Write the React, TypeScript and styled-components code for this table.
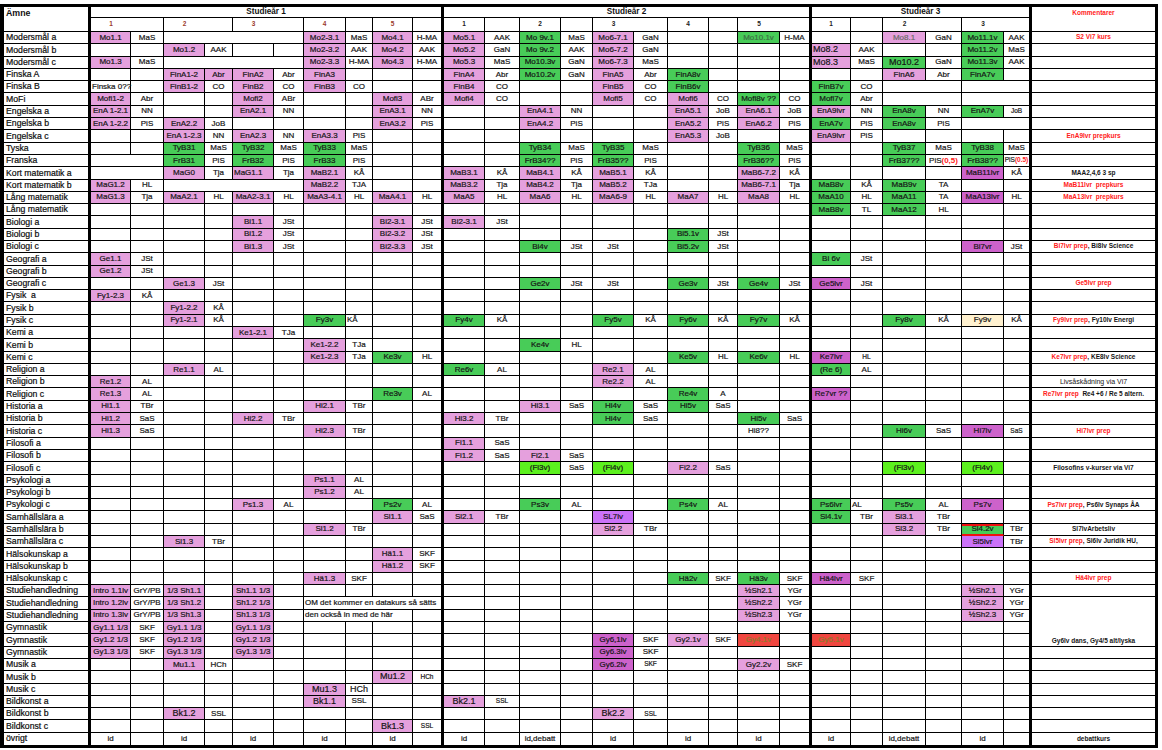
import React from 'react';
import styled, { createGlobalStyle, css } from 'styled-components';

const GlobalStyle = createGlobalStyle`
  html, body {
    margin: 0;
    padding: 0;
    background: #fff;
  }
  body {
    font-family: "Liberation Sans", Arial, sans-serif;
    color: #111;
  }
`;

// column widths: subject, year 1 (5 periods x course/teacher), year 2, year 3, comments
const COLS = [87, 40, 33, 41, 28, 41, 30, 42, 27, 40, 31, 41, 35, 41, 32, 41, 34, 41, 29, 42, 32, 39, 32, 43, 36, 42, 28, 123];
const THICK = [0, 10, 20, 26];

const FILL: Record<string, string> = {
  p: '#e5a0dd',
  m: '#cd62cb',
  v: '#cb72f8',
  g: '#48cc58',
  l: '#5cf01e',
  r: '#f0463f',
  y: '#fff1cf',
};

type Edge = 'thin' | 'thick' | 'none';
const edgeWidth = (e?: Edge) => (e === 'thick' ? '3px' : e === 'none' ? '0' : '1px');

const Page = styled.div`
  padding-top: 4px;
`;

const Sheet = styled.div`
  box-sizing: border-box;
  display: grid;
  width: max-content;
  height: 744px;
  grid-template-columns: ${COLS.map(w => `${w}px`).join(' ')};
  grid-template-rows: 11px 14px repeat(58, 1fr);
  border: 3px solid #000;
  border-left-width: 4px;
`;

const Cell = styled.div<{ $span?: number; $rows?: number; $edge?: Edge; $flat?: boolean }>`
  box-sizing: border-box;
  grid-column: span ${p => p.$span ?? 1};
  grid-row: span ${p => p.$rows ?? 1};
  border-right: ${p => edgeWidth(p.$edge)} solid #000;
  border-bottom: ${p => (p.$flat ? '0' : '1px')} solid #000;
  display: flex;
  align-items: center;
  min-width: 0;
  white-space: nowrap;
  line-height: 1;
`;

const CornerCell = styled(Cell)`
  align-items: flex-start;
  padding: 2px 0 0 2px;
  font-size: 8.8px;
  font-weight: 700;
`;

const YearCell = styled(Cell)`
  justify-content: center;
  font-size: 8.2px;
  font-weight: 700;
`;

const NoteHead = styled(Cell)`
  justify-content: center;
  align-items: flex-start;
  padding-top: 3px;
  font-size: 6.5px;
  font-weight: 700;
  color: #ff2020;
`;

const PeriodCell = styled(Cell)<{ $first?: boolean }>`
  justify-content: center;
  font-size: 6.5px;
  font-weight: 700;
  color: ${p => (p.$first ? '#9b3b2b' : '#222')};
`;

const SubjectCell = styled(Cell)`
  padding-left: 2px;
  font-size: 8.7px;
  white-space: pre;
  color: #0d0d0d;
  -webkit-text-stroke: 0.2px #0d0d0d;
`;

const CourseCell = styled(Cell)<{ $fill?: string; $left?: boolean; $size?: number; $ink?: string; $redEdge?: boolean }>`
  justify-content: ${p => (p.$left ? 'flex-start' : 'center')};
  padding-left: ${p => (p.$left ? '1px' : '0')};
  background: ${p => p.$fill ?? 'transparent'};
  font-size: ${p => p.$size ?? 8}px;
  color: ${p => p.$ink ?? '#151515'};
  -webkit-text-stroke: 0.2px ${p => p.$ink ?? '#151515'};
  ${p =>
    p.$redEdge &&
    css`
      border-bottom: 2px solid #f01010;
      box-shadow: inset 0 2px 0 #f01010;
    `}
`;

const NoteCell = styled(Cell)<{ $plain?: boolean; $low?: boolean }>`
  justify-content: center;
  align-items: ${p => (p.$low ? 'flex-end' : 'center')};
  padding-bottom: ${p => (p.$low ? '1px' : '0')};
  font-size: ${p => (p.$plain ? 7 : 6.5)}px;
  font-weight: ${p => (p.$plain ? 400 : 700)};
  color: #161616;
`;

const Hot = styled.span`
  color: #ff2020;
  font-weight: 700;
  -webkit-text-stroke: 0;
`;

const Small = styled.span`
  font-size: 6.5px;
`;

type Spec = string | number | { t: React.ReactNode; span?: number; left?: boolean; fill?: string; redEdge?: boolean; size?: number };

type Row = {
  s: string;
  c: Record<number, Spec>;
  n?: React.ReactNode;
  plain?: boolean;
  nRows?: number;
  skipNote?: boolean;
};

type Look = { text: React.ReactNode; span: number; fill?: string; left?: boolean; size?: number; ink?: string; redEdge?: boolean };

// 'p:Mo1.1' -> pink cell, flags: fill letter, s small, B big, L left, d dim ink
function look(v: Spec | undefined): Look {
  if (v === undefined) return { text: null, span: 1 };
  if (typeof v === 'number') return { text: null, span: v };
  if (typeof v === 'object') return { text: v.t, span: v.span ?? 1, fill: v.fill, left: v.left, redEdge: v.redEdge, size: v.size };
  const m = /^([A-Za-z]+):(.+)$/.exec(v);
  const flags = m ? m[1] : '';
  const text = m ? m[2] : v;
  const key = flags.split('').find(f => f in FILL);
  const fill = key ? FILL[key] : undefined;
  let ink: string | undefined;
  if (key === 'r') ink = '#8a7a2a';
  if (flags.includes('d')) ink = key === 'g' ? '#3d6e45' : '#6a6a6a';
  return {
    text,
    span: 1,
    fill,
    ink,
    left: flags.includes('L'),
    size: flags.includes('s') ? 6.5 : flags.includes('B') ? 9 : undefined,
  };
}

const rows: Row[] = [
  { s: 'Modersmål a', c: { 1: 'p:Mo1.1', 2: 'MaS', 3: 4, 7: 'p:Mo2-3.1', 8: 'MaS', 9: 'p:Mo4.1', 10: 'H-MA', 11: 'p:Mo5.1', 12: 'AAK', 13: 'g:Mo 9v.1', 14: 'MaS', 15: 'p:Mo6-7.1', 16: 'GaN', 19: 'gd:Mo10.1v', 20: 'H-MA', 23: 'pd:Mo8.1', 24: 'GaN', 25: 'g:Mo11.1v', 26: 'AAK' }, n: <Hot>S2 Vi7 kurs</Hot> },
  { s: 'Modersmål b', c: { 3: 'p:Mo1.2', 4: 'AAK', 7: 'p:Mo2-3.2', 8: 'AAK', 9: 'p:Mo4.2', 10: 'AAK', 11: 'p:Mo5.2', 12: 'GaN', 13: 'g:Mo 9v.2', 14: 'AAK', 15: 'p:Mo6-7.2', 16: 'GaN', 21: 'pLB:Mo8.2', 22: 'AAK', 25: 'g:Mo11.2v', 26: 'MaS' } },
  { s: 'Modersmål c', c: { 1: 'p:Mo1.3', 2: 'MaS', 3: 4, 7: 'p:Mo2-3.3', 8: 'H-MA', 9: 'p:Mo4.3', 10: 'H-MA', 11: 'p:Mo5.3', 12: 'MaS', 13: 'g:Mo10.3v', 14: 'GaN', 15: 'p:Mo6-7.3', 16: 'MaS', 21: 'pLB:Mo8.3', 22: 'MaS', 23: 'gB:Mo10.2', 24: 'GaN', 25: 'g:Mo11.3v', 26: 'AAK' } },
  { s: 'Finska A', c: { 3: 'p:FinA1-2', 4: 'p:Abr', 5: 'p:FinA2', 6: 'Abr', 7: 'p:FinA3', 11: 'p:FinA4', 12: 'Abr', 13: 'g:Mo10.2v', 14: 'GaN', 15: 'p:FinA5', 16: 'Abr', 17: 'g:FinA8v', 23: 'p:FinA6', 24: 'Abr', 25: 'g:FinA7v' } },
  { s: 'Finska B', c: { 1: 'L:Finska 0??', 3: 'p:FinB1-2', 4: 'CO', 5: 'p:FinB2', 6: 'CO', 7: 'p:FinB3', 8: 'CO', 11: 'p:FinB4', 12: 'CO', 15: 'p:FinB5', 16: 'CO', 17: 'g:FinB6v', 21: 'g:FinB7v', 22: 'CO', 23: 2, 25: 2 } },
  { s: 'MoFi', c: { 1: 'p:Mofi1-2', 2: 'Abr', 5: 'p:Mofi2', 6: 'ABr', 9: 'p:Mofi3', 10: 'ABr', 11: 'p:Mofi4', 12: 'CO', 15: 'p:Mofi5', 16: 'CO', 17: 'p:Mofi6', 18: 'CO', 19: 'g:Mofi8v ??', 20: 'CO', 21: 'g:Mofi7v', 22: 'Abr', 23: 2, 25: 2 } },
  { s: 'Engelska a', c: { 1: 'p:EnA 1-2.1', 2: 'NN', 5: 'p:EnA2.1', 6: 'NN', 9: 'p:EnA3.1', 10: 'NN', 13: 'p:EnA4.1', 14: 'NN', 17: 'p:EnA5.1', 18: 'JoB', 19: 'p:EnA6.1', 20: 'JoB', 21: 'p:EnA9lvr', 22: 'NN', 23: 'g:EnA8v', 24: 'NN', 25: 'g:EnA7v', 26: 's:JoB' } },
  { s: 'Engelska b', c: { 1: 'p:EnA 1-2.2', 2: 'PiS', 3: 'p:EnA2.2', 4: 'JoB', 9: 'p:EnA3.2', 10: 'PiS', 13: 'p:EnA4.2', 14: 'PiS', 17: 'p:EnA5.2', 18: 'PiS', 19: 'p:EnA6.2', 20: 'PiS', 21: 'g:EnA7v', 22: 'PiS', 23: 'g:EnA8v', 24: 'PiS', 25: 2 } },
  { s: 'Engelska c', c: { 3: 'p:EnA 1-2.3', 4: 'NN', 5: 'p:EnA2.3', 6: 'NN', 7: 'p:EnA3.3', 8: 'PiS', 17: 'p:EnA5.3', 18: 'JoB', 21: 'p:EnA9lvr', 22: 'PiS' }, n: <Hot>EnA9lvr prepkurs</Hot> },
  { s: 'Tyska', c: { 3: 'g:TyB31', 4: 'MaS', 5: 'g:TyB32', 6: 'MaS', 7: 'g:TyB33', 8: 'MaS', 13: 'g:TyB34', 14: 'MaS', 15: 'g:TyB35', 16: 'MaS', 19: 'g:TyB36', 20: 'MaS', 23: 'g:TyB37', 24: 'MaS', 25: 'g:TyB38', 26: 'MaS' } },
  {
    s: 'Franska',
    c: {
      1: 2, 3: 'g:FrB31', 4: 'PiS', 5: 'g:FrB32', 6: 'PiS', 7: 'g:FrB33', 8: 'PiS', 13: 'g:FrB34??', 14: 'PiS', 15: 'g:FrB35??', 16: 'PiS', 19: 'g:FrB36??', 20: 'PiS', 23: 'g:FrB37??',
      24: { t: <>PiS<Hot>(0,5)</Hot></> },
      25: 'g:FrB38??',
      26: { t: <Small>PiS<Hot>(0.5)</Hot></Small> },
    },
  },
  { s: 'Kort matematik a', c: { 1: 2, 3: 'p:MaG0', 4: 'Tja', 5: 'pL:MaG1.1', 6: 'Tja', 7: 'p:MaB2.1', 8: 'KÅ', 11: 'p:MaB3.1', 12: 'KÅ', 13: 'p:MaB4.1', 14: 'KÅ', 15: 'p:MaB5.1', 16: 'KÅ', 19: 'p:MaB6-7.2', 20: 'KÅ', 25: 'm:MaB11lvr', 26: 'KÅ' }, n: 'MAA2,4,6 3 sp' },
  { s: 'Kort matematik b', c: { 1: 'p:MaG1.2', 2: 'HL', 3: 4, 7: 'p:MaB2.2', 8: 'TJA', 11: 'p:MaB3.2', 12: 'Tja', 13: 'p:MaB4.2', 14: 'Tja', 15: 'p:MaB5.2', 16: 'TJa', 19: 'p:MaB6-7.1', 20: 'Tja', 21: 'g:MaB8v', 22: 'KÅ', 23: 'g:MaB9v', 24: 'TA' }, n: <Hot>MaB11lvr&nbsp; prepkurs</Hot> },
  { s: 'Lång matematik', c: { 1: 'p:MaG1.3', 2: 'Tja', 3: 'p:MaA2.1', 4: 'HL', 5: 'p:MaA2-3.1', 6: 'HL', 7: 'p:MaA3-4.1', 8: 'HL', 9: 'p:MaA4.1', 10: 'HL', 11: 'p:MaA5', 12: 'HL', 13: 'p:MaA6', 14: 'HL', 15: 'p:MaA6-9', 16: 'HL', 17: 'p:MaA7', 18: 'HL', 19: 'p:MaA8', 20: 'HL', 21: 'g:MaA10', 22: 'HL', 23: 'g:MaA11', 24: 'TA', 25: 'm:MaA13lvr', 26: 'HL' }, n: <Hot>MaA13lvr&nbsp; prepkurs</Hot> },
  { s: 'Lång matematik', c: { 21: 'g:MaB8v', 22: 'TL', 23: 'g:MaA12', 24: 'HL' } },
  { s: 'Biologi a', c: { 5: 'p:Bi1.1', 6: 'JSt', 9: 'p:Bi2-3.1', 10: 'JSt', 11: 'p:Bi2-3.1', 12: 'JSt' } },
  { s: 'Biologi b', c: { 5: 'p:Bi1.2', 6: 'JSt', 9: 'p:Bi2-3.2', 10: 'JSt', 17: 'g:Bi5.1v', 18: 'JSt' } },
  { s: 'Biologi c', c: { 5: 'p:Bi1.3', 6: 'JSt', 9: 'p:Bi2-3.3', 10: 'JSt', 13: 'g:Bi4v', 14: 'JSt', 15: 'JSt', 17: 'g:Bi5.2v', 18: 'JSt', 25: 'm:Bi7vr', 26: 'JSt' }, n: <><Hot>Bi7lvr prep</Hot>, Bi8lv Science</> },
  { s: 'Geografi a', c: { 1: 'p:Ge1.1', 2: 'JSt', 21: 'g:Bi 6v', 22: 'JSt' } },
  { s: 'Geografi b', c: { 1: 'p:Ge1.2', 2: 'JSt' } },
  { s: 'Geografi c', c: { 3: 'p:Ge1.3', 4: 'JSt', 13: 'g:Ge2v', 14: 'JSt', 15: 'JSt', 17: 'g:Ge3v', 18: 'JSt', 19: 'g:Ge4v', 20: 'JSt', 21: 'm:Ge5lvr', 22: 'JSt' }, n: <Hot>Ge5lvr prep</Hot> },
  { s: 'Fysik  a', c: { 1: 'p:Fy1-2.3', 2: 'KÅ' } },
  { s: 'Fysik b', c: { 3: 'p:Fy1-2.2', 4: 'KÅ' } },
  { s: 'Fysik c', c: { 3: 'p:Fy1-2.1', 4: 'KÅ', 7: 'g:Fy3v', 8: 'L:KÅ', 11: 'g:Fy4v', 12: 'KÅ', 15: 'g:Fy5v', 16: 'KÅ', 17: 'g:Fy6v', 18: 'KÅ', 19: 'g:Fy7v', 20: 'KÅ', 23: 'g:Fy8v', 24: 'KÅ', 25: 'y:Fy9v', 26: 'KÅ' }, n: <><Hot>Fy9lvr prep</Hot>, Fy10lv Energi</> },
  { s: 'Kemi a', c: { 5: 'p:Ke1-2.1', 6: 'TJa' } },
  { s: 'Kemi b', c: { 7: 'p:Ke1-2.2', 8: 'TJa', 13: 'g:Ke4v', 14: 'HL' } },
  { s: 'Kemi c', c: { 7: 'p:Ke1-2.3', 8: 'TJa', 9: 'g:Ke3v', 10: 'HL', 17: 'g:Ke5v', 18: 'HL', 19: 'g:Ke6v', 20: 'HL', 21: 'm:Ke7lvr', 22: 's:HL' }, n: <><Hot>Ke7lvr prep</Hot>, KE8lv Science</> },
  { s: 'Religion a', c: { 3: 'p:Re1.1', 4: 'AL', 11: 'g:Re6v', 12: 'AL', 15: 'p:Re2.1', 16: 'AL', 21: 'g:(Re 6)', 22: 'AL' } },
  { s: 'Religion b', c: { 1: 'p:Re1.2', 2: 'AL', 15: 'p:Re2.2', 16: 'AL' }, n: 'Livsåskådning via Vi7', plain: true },
  { s: 'Religion c', c: { 1: 'p:Re1.3', 2: 'AL', 9: 'g:Re3v', 10: 'AL', 17: 'g:Re4v', 18: 'A', 21: 'm:Re7vr ??' }, n: <><Hot>Re7lvr prep</Hot>&nbsp; Re4 +6 / Re 5 altern.</> },
  { s: 'Historia a', c: { 1: 'p:Hi1.1', 2: 'TBr', 7: 'p:Hi2.1', 8: 'TBr', 13: 'p:Hi3.1', 14: 'SaS', 15: 'g:Hi4v', 16: 'SaS', 17: 'g:Hi5v', 18: 'SaS' } },
  { s: 'Historia b', c: { 1: 'p:Hi1.2', 2: 'SaS', 5: 'p:Hi2.2', 6: 'TBr', 11: 'p:Hi3.2', 12: 'TBr', 15: 'g:Hi4v', 16: 'SaS', 19: 'g:Hi5v', 20: 'SaS' } },
  { s: 'Historia c', c: { 1: 'p:Hi1.3', 2: 'SaS', 7: 'p:Hi2.3', 8: 'TBr', 19: 'Hi8??', 23: 'g:Hi6v', 24: 'SaS', 25: 'm:Hi7lv', 26: 's:SaS' }, n: <Hot>Hi7lvr prep</Hot> },
  { s: 'Filosofi a', c: { 11: 'p:Fi1.1', 12: 'SaS' } },
  { s: 'Filosofi b', c: { 11: 'p:Fi1.2', 12: 'SaS', 13: 'p:Fi2.1', 14: 'SaS' } },
  { s: 'Filosofi c', c: { 13: 'l:(Fi3v)', 14: 'SaS', 15: 'l:(Fi4v)', 17: 'p:Fi2.2', 18: 'SaS', 23: 'l:(Fi3v)', 25: 'l:(Fi4v)' }, n: 'Filosofins v-kurser via Vi7' },
  { s: 'Psykologi a', c: { 7: 'p:Ps1.1', 8: 'AL' } },
  { s: 'Psykologi b', c: { 7: 'p:Ps1.2', 8: 'AL' } },
  { s: 'Psykologi c', c: { 5: 'p:Ps1.3', 6: 'AL', 9: 'g:Ps2v', 10: 'AL', 13: 'g:Ps3v', 14: 'AL', 17: 'g:Ps4v', 18: 'AL', 21: 'g:Ps6lvr', 22: 'L:AL', 23: 'g:Ps5v', 24: 'AL', 25: 'm:Ps7v' }, n: <><Hot>Ps7lvr prep</Hot>, Ps6lv Synaps ÅA</> },
  { s: 'Samhällslära a', c: { 9: 'p:Sl1.1', 10: 'SaS', 11: 'p:Sl2.1', 12: 'TBr', 15: 'v:SL7lv', 21: 'g:Sl4.1v', 22: 'TBr', 23: 'p:Sl3.1', 24: 'TBr' } },
  { s: 'Samhällslära b', c: { 7: 'p:Sl1.2', 8: 'TBr', 15: 'p:Sl2.2', 16: 'TBr', 23: 'p:Sl3.2', 24: 'TBr', 25: { t: 'Sl4.2v', fill: FILL.g, redEdge: true }, 26: 'TBr' }, n: 'Sl7lvArbetsliv' },
  { s: 'Samhällslära c', c: { 3: 'p:Sl1.3', 4: 'TBr', 25: 'v:Sl5lvr', 26: 'TBr' }, n: <><Hot>Sl5lvr prep</Hot>, Sl6lv Juridik HU,</> },
  { s: 'Hälsokunskap a', c: { 9: 'p:Hä1.1', 10: 'SKF' } },
  { s: 'Hälsokunskap b', c: { 9: 'p:Hä1.2', 10: 'SKF' } },
  { s: 'Hälsokunskap c', c: { 7: 'p:Hä1.3', 8: 'SKF', 17: 'g:Hä2v', 18: 'SKF', 19: 'g:Hä3v', 20: 'SKF', 21: 'm:Hä4lvr', 22: 'SKF' }, n: <Hot>Hä4lvr prep</Hot> },
  { s: 'Studiehandledning', c: { 1: 'p:Intro 1.1lv', 2: 'GrY/PB', 3: 'p:1/3 Sh1.1', 5: 'p:Sh1.1 1/3', 19: 'p:½Sh2.1', 20: 'YGr', 25: 'p:½Sh2.1', 26: 'YGr' } },
  { s: 'Studiehandledning', c: { 1: 'p:Intro 1.2lv', 2: 'GrY/PB', 3: 'p:1/3 Sh1.2', 5: 'p:Sh1.2 1/3', 7: { t: 'OM det kommer en datakurs så sätts', span: 4, left: true }, 19: 'p:½Sh2.2', 20: 'YGr', 25: 'p:½Sh2.2', 26: 'YGr' }, n: 'Gy6lv dans, Gy4/5 alt/lyska', nRows: 4 },
  { s: 'Studiehandledning', c: { 1: 'p:Intro 1.3lv', 2: 'GrY/PB', 3: 'p:1/3 Sh1.3', 5: 'p:Sh1.3 1/3', 7: { t: 'den också in med de här', span: 3, left: true }, 19: 'p:½Sh2.3', 20: 'YGr', 25: 'p:½Sh2.3', 26: 'YGr' }, skipNote: true },
  { s: 'Gymnastik', c: { 1: 'p:Gy1.1 1/3', 2: 'SKF', 3: 'p:Gy1.1 1/3', 5: 'p:Gy1.1 1/3' }, skipNote: true },
  { s: 'Gymnastik', c: { 1: 'p:Gy1.2 1/3', 2: 'SKF', 3: 'p:Gy1.2 1/3', 5: 'p:Gy1.2 1/3', 15: 'm:Gy6,1lv', 16: 'SKF', 17: 'p:Gy2.1v', 18: 'SKF', 19: 'r:Gy4.1v', 21: 'r:Gy5.1v' }, skipNote: true },
  { s: 'Gymnastik', c: { 1: 'p:Gy1.3 1/3', 2: 'SKF', 3: 'p:Gy1.3 1/3', 5: 'p:Gy1.3 1/3', 15: 'm:Gy6.3lv', 16: 'SKF' } },
  { s: 'Musik a', c: { 3: 'p:Mu1.1', 4: 'HCh', 15: 'm:Gy6.2lv', 16: 's:SKF', 19: 'p:Gy2.2v', 20: 'SKF' } },
  { s: 'Musik b', c: { 9: 'pB:Mu1.2', 10: 's:HCh' } },
  { s: 'Musik c', c: { 7: 'pB:Mu1.3', 8: 'B:HCh' } },
  { s: 'Bildkonst a', c: { 7: 'pB:Bk1.1', 8: 'SSL', 11: 'pB:Bk2.1', 12: 's:SSL' } },
  { s: 'Bildkonst b', c: { 3: 'pB:Bk1.2', 4: 'SSL', 15: 'pB:Bk2.2', 16: 's:SSL' } },
  { s: 'Bildkonst c', c: { 9: 'pB:Bk1.3', 10: 's:SSL' } },
  { s: 'övrigt', c: { 1: 'id', 3: 'id', 5: 'id', 7: 'id', 9: 'id', 11: 'id', 13: 'id,debatt', 15: 'id', 17: 'id', 19: 'id', 21: 'id', 23: 'id,debatt', 25: 'id' }, n: 'debattkurs' },
];

const YEARS = [
  { label: 'Studieår 1', span: 10, joined: [true, true, true, false, false] },
  { label: 'Studieår 2', span: 10, joined: [false, false, true, false, true] },
  { label: 'Studieår 3', span: 6, joined: [false, true, true] },
];

function periodCells() {
  return YEARS.flatMap((y, yi) =>
    y.joined.flatMap((joined, pi) => {
      const lastInYear = pi === y.joined.length - 1;
      return [
        <PeriodCell key={`p${yi}-${pi}`} $first={yi === 0} $edge={joined ? 'none' : 'thin'}>
          {pi + 1}
        </PeriodCell>,
        <PeriodCell key={`t${yi}-${pi}`} $edge={lastInYear ? 'thick' : 'thin'} />,
      ];
    }),
  );
}

function rowCells(row: Row, ri: number, last: boolean) {
  const out: React.ReactNode[] = [
    <SubjectCell key={`s${ri}`} $edge="thick" $flat={last}>
      {row.s}
    </SubjectCell>,
  ];
  let col = 1;
  while (col <= 26) {
    const l = look(row.c[col]);
    const end = col + l.span - 1;
    out.push(
      <CourseCell
        key={`c${ri}-${col}`}
        $span={l.span}
        $edge={THICK.includes(end) ? 'thick' : 'thin'}
        $flat={last}
        $fill={l.fill}
        $left={l.left}
        $size={l.size}
        $ink={l.ink}
        $redEdge={l.redEdge}
      >
        {l.text}
      </CourseCell>,
    );
    col += l.span;
  }
  if (!row.skipNote) {
    out.push(
      <NoteCell key={`n${ri}`} $edge="none" $flat={last} $rows={row.nRows} $low={!!row.nRows} $plain={row.plain}>
        {row.n}
      </NoteCell>,
    );
  }
  return out;
}

export default function App() {
  return (
    <>
      <GlobalStyle />
      <Page>
        <Sheet>
          <CornerCell $rows={2} $edge="thick">Ämne</CornerCell>
          {YEARS.map(y => (
            <YearCell key={y.label} $span={y.span} $edge="thick">
              {y.label}
            </YearCell>
          ))}
          <NoteHead $rows={2} $edge="none">Kommentarer</NoteHead>
          {periodCells()}
          {rows.flatMap((r, i) => rowCells(r, i, i === rows.length - 1))}
        </Sheet>
      </Page>
    </>
  );
}
